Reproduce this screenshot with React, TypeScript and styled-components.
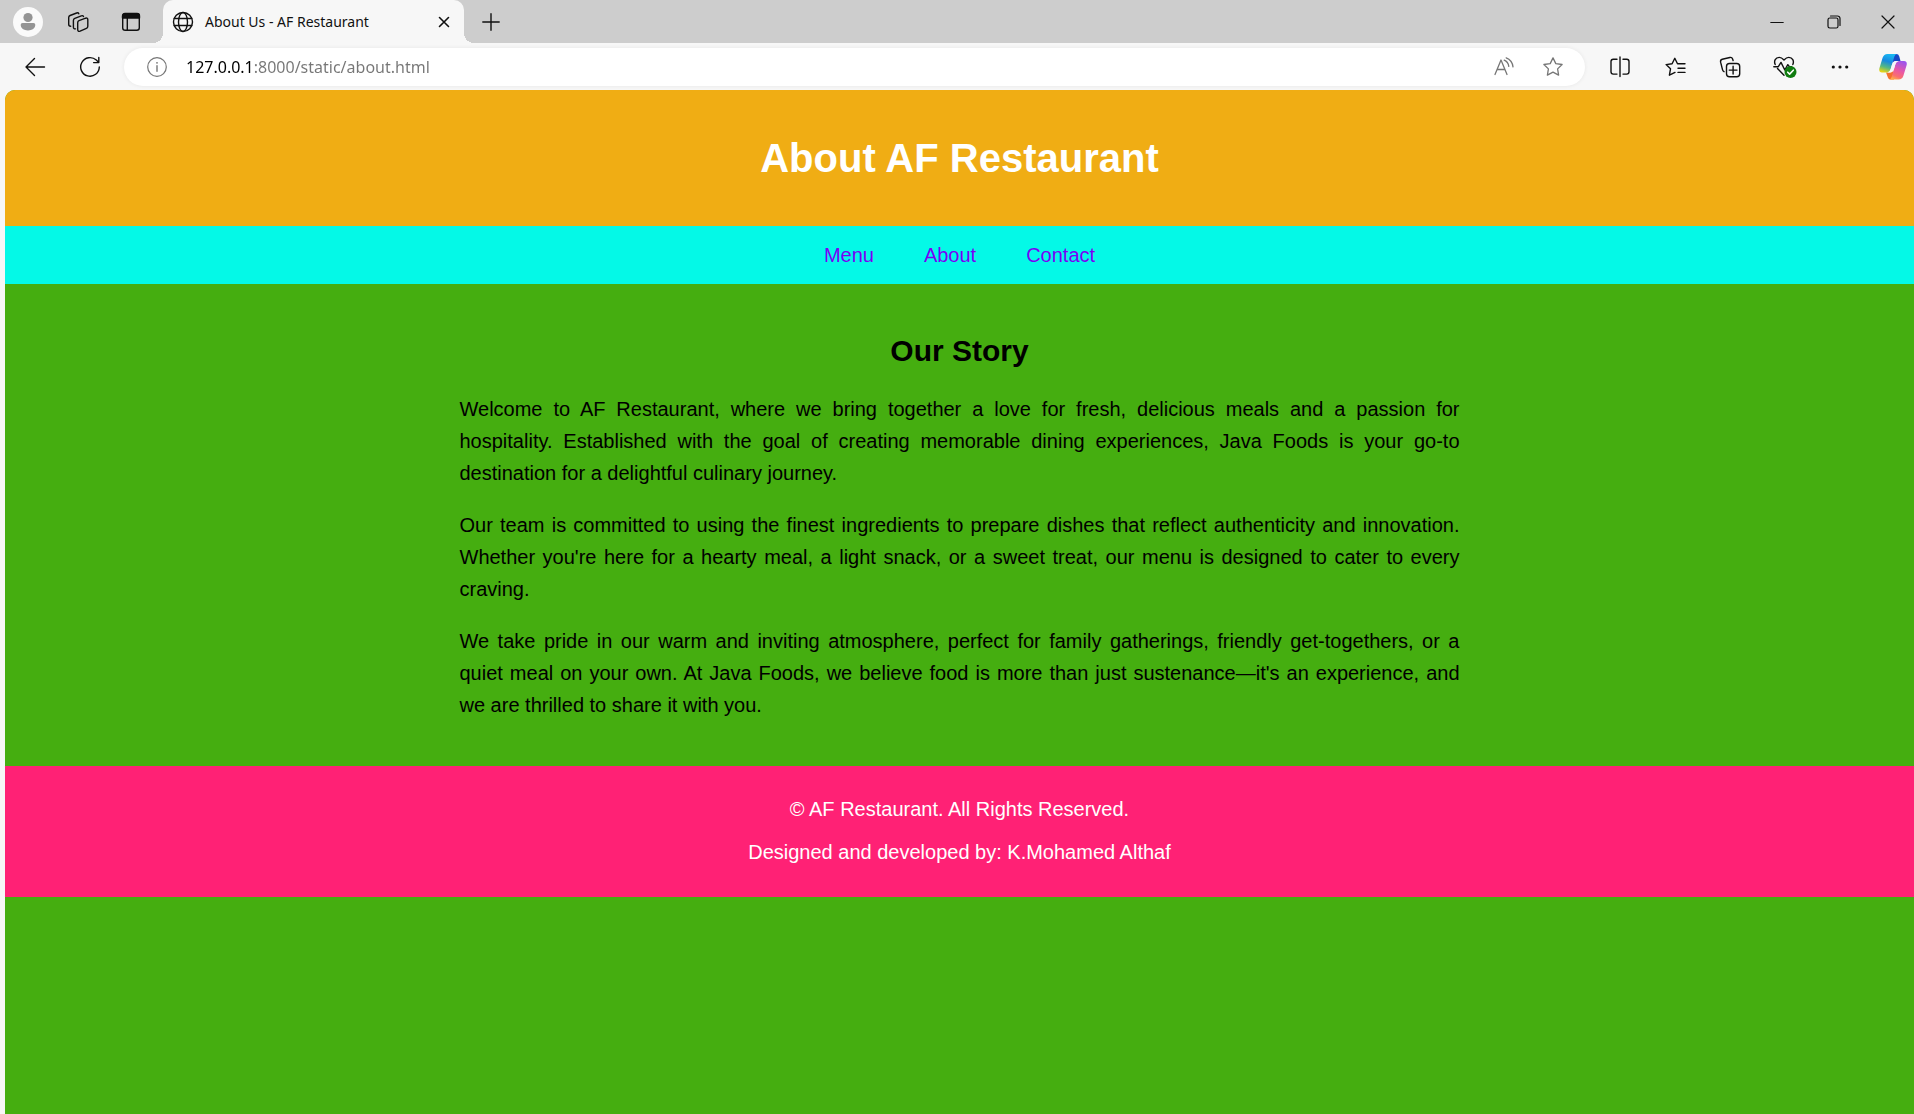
import React from "react";
import styled, { createGlobalStyle } from "styled-components";

const GlobalStyle = createGlobalStyle`
  *, *::before, *::after { box-sizing: border-box; }
  body { margin: 0; background: #f7f7f7; }
`;

const chromeFont = `"Noto Sans", "Open Sans", sans-serif`;
const pageFont = `"Liberation Sans", Arial, sans-serif`;

const Window = styled.div`
  display: flex;
  flex-direction: column;
  min-height: 100vh;
  font-family: ${chromeFont};
  color: #111;
`;

const TabStrip = styled.div`
  display: flex;
  height: 43px;
  background: #cdcdcd;
`;

const IconButton = styled.button<{ $width: number; $align?: string }>`
  display: flex;
  flex: none;
  align-items: center;
  justify-content: ${(p) => p.$align ?? "center"};
  width: ${(p) => p.$width}px;
  height: 100%;
  padding: 0;
  border: 0;
  background: none;
  color: inherit;
  font: inherit;
`;

const ProfileButton = styled(IconButton)`
  padding-left: 13px;
`;

const Tab = styled.div`
  position: relative;
  display: flex;
  align-items: center;
  width: 301px;
  margin-left: 6px;
  padding-left: 9px;
  background: #f7f7f7;
  border-radius: 10px 10px 0 0;

  &::before,
  &::after {
    content: "";
    position: absolute;
    bottom: 0;
    width: 10px;
    height: 10px;
  }
  &::before {
    right: 100%;
    background: radial-gradient(circle at 0 0, transparent 10px, #f7f7f7 10px);
  }
  &::after {
    left: 100%;
    background: radial-gradient(circle at 100% 0, transparent 10px, #f7f7f7 10px);
  }
`;

const TabTitle = styled.span`
  flex: 1;
  margin-left: 11px;
  font-size: 14px;
  line-height: 20px;
  white-space: nowrap;
`;

const WindowControls = styled.div`
  display: flex;
  margin-left: auto;
`;

const Toolbar = styled.div`
  display: flex;
  align-items: center;
  height: 47px;
  padding: 0 7px;
`;

const AddressBar = styled.form`
  display: flex;
  flex: 1;
  align-items: center;
  height: 38px;
  margin: 0 7px;
  padding: 0 8px 0 22px;
  color: #767676;
  background: #fff;
  border-radius: 19px;
  box-shadow: 0 0 4px rgba(0, 0, 0, 0.07);
`;

const AddressInput = styled.input`
  flex: 1;
  min-width: 0;
  height: 30px;
  margin-left: 18px;
  padding: 0;
  border: 0;
  outline: 0;
  font-family: ${chromeFont};
  font-size: 16px;
  color: #767676;
  background: linear-gradient(to right, #000 68px, #767676 68px);
  background-clip: text;
  -webkit-background-clip: text;
  -webkit-text-fill-color: transparent;
`;

const Page = styled.div`
  flex: 1;
  margin-left: 5px;
  overflow: hidden;
  border-radius: 10px 10px 0 0;
  background: #45ae10;
  color: #000;
  font-family: ${pageFont};
  font-size: 20px;
  line-height: 23px;
`;

const Header = styled.header`
  padding: 45px 25px;
  background: #f0ad14;
  color: #fff;
  text-align: center;
`;

const Title = styled.h1`
  margin: 0;
  font-size: 40px;
  line-height: 46px;
`;

const Nav = styled.nav`
  display: flex;
  justify-content: center;
  gap: 50px;
  padding: 17px;
  line-height: 24px;
  background: #04f9e7;
`;

const NavLink = styled.a`
  color: #7a00f5;
  text-decoration: none;
`;

const Story = styled.main`
  max-width: 1050px;
  margin: 0 auto;
  padding: 50px 25px 45px;
`;

const StoryTitle = styled.h2`
  margin: 0 0 25px;
  font-size: 30px;
  line-height: 34px;
  text-align: center;
`;

const Paragraph = styled.p`
  margin: 0;
  line-height: 32px;
  text-align: justify;

  & + & {
    margin-top: 20px;
  }
`;

const Footer = styled.footer`
  display: flex;
  flex-direction: column;
  gap: 20px;
  padding: 32px 25px 33px;
  background: #ff2175;
  color: #fff;
  text-align: center;
`;

const FooterLine = styled.p`
  margin: 0;
`;

const Icon = ({ size = 22, children }: { size?: number; children: React.ReactNode }) => (
  <svg
    width={size}
    height={size}
    viewBox={`0 0 ${size} ${size}`}
    fill="none"
    stroke="currentColor"
    strokeWidth="1.4"
    strokeLinecap="round"
    strokeLinejoin="round"
    aria-hidden="true"
  >
    {children}
  </svg>
);

const ProfileIcon = () => (
  <Icon size={30}>
    <circle cx="15" cy="15" r="15" fill="#fafafa" stroke="none" />
    <circle cx="15" cy="10.5" r="4.6" fill="#949494" stroke="none" />
    <path d="M9.5 16h11a1.8 1.8 0 0 1 1.8 1.8c0 3.6-3.2 5.6-7.3 5.6s-7.3-2-7.3-5.6A1.8 1.8 0 0 1 9.5 16Z" fill="#949494" stroke="none" />
  </Icon>
);

const WorkspacesIcon = () => (
  <Icon>
    <path d="M12 9.6 18.6 7.2q2.2-.6 2.200 1.500v6.600q0 1.500-1.400 2.100l-6.300 2.800q-2.400.8-2.400-1.600v-6.900q0-1.500 1.300-2.100Z" />
    <path d="M8.5 17.900q-2.100.1-2.100-2V9.400q0-1.500 1.400-2.100l6.500-2.500q1.700-.6 2.200.8" />
    <path d="M3.700 15.200q-2-.1-2-2V6.600q0-1.500 1.400-2.100l6.500-2.500q1.700-.6 2.200.8" />
  </Icon>
);

const TabActionsIcon = () => (
  <Icon>
    <rect x="2.700" y="2.700" width="16.600" height="16.600" rx="2.500" />
    <path d="M2.500 7V5a2.500 2.500 0 0 1 2.500-2.500h12A2.500 2.500 0 0 1 19.500 5v2Z" fill="currentColor" />
    <path d="M7.300 7v12" />
  </Icon>
);

const GlobeIcon = () => (
  <Icon>
    <circle cx="11" cy="11" r="9.5" />
    <ellipse cx="11" cy="11" rx="4.5" ry="9.5" />
    <path d="M2.300 7.500h17.400M2.300 14.500h17.400" />
  </Icon>
);

const CloseTabIcon = () => (
  <Icon size={12}>
    <path d="m1.500 1.500 9 9m0-9-9 9" strokeWidth="1.6" />
  </Icon>
);

const NewTabIcon = () => (
  <Icon size={18}>
    <path d="M9 .8v16.400M.8 9h16.400" />
  </Icon>
);

const MinimizeIcon = () => (
  <Icon size={14}>
    <path d="M.8 7.500h12.400" strokeWidth="1.2" />
  </Icon>
);

const RestoreIcon = () => (
  <Icon size={14}>
    <rect x="1" y="3" width="10" height="10" rx="1.8" strokeWidth="1.2" />
    <path d="M3.500 1H10.500a2.500 2.500 0 0 1 2.500 2.500v7" strokeWidth="1.2" />
  </Icon>
);

const CloseWindowIcon = () => (
  <Icon size={14}>
    <path d="m1 1 12 12m0-12L1 13" strokeWidth="1.2" />
  </Icon>
);

const BackIcon = () => (
  <Icon>
    <path d="M20.500 11H2m8.500-8.500L2 11l8.500 8.500" />
  </Icon>
);

const ReloadIcon = () => (
  <Icon>
    <path d="M20.300 11a9.300 9.300 0 1 1-3-6.900l2.200 2.200M19.800 1.400v5.200h-5.200" />
  </Icon>
);

const InfoIcon = () => (
  <Icon>
    <circle cx="11" cy="11" r="9.300" strokeWidth="1.2" />
    <path d="M11 9.800v5.400" />
    <circle cx="11" cy="6.800" r=".9" fill="currentColor" stroke="none" />
  </Icon>
);

const ReadAloudIcon = () => (
  <Icon>
    <path d="m2 18.500 6-14.500 6 14.500M4.200 13.500h7.600M11.200 4.200q4 1.600 4.600 6.200M13.200 1.800q6 2.300 6.800 9" strokeWidth="1.3" />
  </Icon>
);

const StarIcon = () => (
  <Icon>
    <path d="m11 1.900 2.800 5.700 6.300.9-4.500 4.400 1 6.200-5.600-2.900-5.600 2.900 1-6.200L1.900 8.500l6.300-.9Z" strokeWidth="1.3" />
  </Icon>
);

const SplitIcon = () => (
  <Icon>
    <path d="M8 3.300H4.300a2.300 2.300 0 0 0-2.300 2.300v10.200a2.300 2.300 0 0 0 2.300 2.300H8M14 3.300h3.700A2.300 2.300 0 0 1 20 5.600v10.200a2.300 2.300 0 0 1-2.300 2.300H14M11 1v19.500" />
  </Icon>
);

const FavoritesIcon = () => (
  <Icon>
    <path d="M21 7.700h-7.500l-2.700-5.400-2.700 5.400-6 .9 4.400 4.200-1.100 6.400L11 16.400M14 12.200h7M14 16.400h7" />
  </Icon>
);

const CollectionsIcon = () => (
  <Icon>
    <rect x="7.500" y="7.500" width="13.200" height="13.200" rx="3" />
    <path d="M14.100 10.200v7.800M10.200 14.100H18M5 15.700q-1.200-.5-1.500-2L1.600 6.200q-.5-2.300 1.700-2.900l7.600-1.800q2-.5 2.700 1.500l.5 1.500" />
  </Icon>
);

const EssentialsIcon = () => (
  <Icon size={26}>
    <path d="M3.200 10.500C1.600 7 3.500 3.400 7.200 3.400q2.300 0 4.800 2.700 2.500-2.700 4.800-2.700c3.700 0 5.600 3.600 4 7.100M1.800 12.700h4.500l2.700-4.300 3.800 7.600 3-5.300 1.700 2h2M5.500 14.500l6.500 6.700" />
    <circle cx="18.500" cy="18" r="6" fill="#107c10" stroke="none" />
    <path d="m15.700 18.200 1.900 1.900 3.700-3.900" stroke="#fff" strokeWidth="1.6" />
  </Icon>
);

const MoreIcon = () => (
  <Icon size={18}>
    <g fill="currentColor" stroke="none">
      <circle cx="2.300" cy="9" r="1.6" />
      <circle cx="9" cy="9" r="1.6" />
      <circle cx="15.700" cy="9" r="1.6" />
    </g>
  </Icon>
);

const CopilotIcon = () => (
  <Icon size={28}>
    <defs>
      <linearGradient id="cool" x1="0.6" y1="0" x2="0.3" y2="1">
        <stop offset="0" stopColor="#19b9f2" />
        <stop offset="0.4" stopColor="#1789e0" />
        <stop offset="0.72" stopColor="#55b883" />
        <stop offset="1" stopColor="#e9d414" />
      </linearGradient>
      <linearGradient id="warm" x1="0.7" y1="0" x2="0.3" y2="1">
        <stop offset="0" stopColor="#9c55ec" />
        <stop offset="0.5" stopColor="#e958a5" />
        <stop offset="0.8" stopColor="#fa6d70" />
        <stop offset="1" stopColor="#ffab48" />
      </linearGradient>
    </defs>
    <g stroke="none">
      <path d="M14 1h3.500q2 0 2.700 2.200L21.500 8H17q-2.500 0-3.500 3Z" fill="#1848c5" />
      <path d="M7 19.500h4q2.300 0 3.200-2.700L15 26.500h-3.500q-2 0-2.700-2.200Z" fill="#f4702c" />
      <path d="M8.500 1H18q-2 .3-2.700 2.800L11.700 16q-1 3.500-4.200 3.500H3q-3.500 0-2.600-4.300L3.600 4.800Q4.800 1 8.500 1Z" fill="url(#cool)" />
      <path d="M19.500 26.500H10q2-.3 2.700-2.800l3.600-12.200Q17.300 8 20.500 8H25q3.500 0 2.600 4.300l-3.200 10.400q-1.200 3.800-4.900 3.800Z" fill="url(#warm)" />
      <path d="M19.500 8Q17.300 8.500 16.400 11.200L15 16q-1 3.500-4 3.500H8.500q2.300-.6 3.200-3.500l1.400-4.800Q14.100 8 17 8Z" fill="#f7f7f7" />
    </g>
  </Icon>
);

const paragraphs = [
  "Welcome to AF Restaurant, where we bring together a love for fresh, delicious meals and a passion for hospitality. Established with the goal of creating memorable dining experiences, Java Foods is your go-to destination for a delightful culinary journey.",
  "Our team is committed to using the finest ingredients to prepare dishes that reflect authenticity and innovation. Whether you're here for a hearty meal, a light snack, or a sweet treat, our menu is designed to cater to every craving.",
  "We take pride in our warm and inviting atmosphere, perfect for family gatherings, friendly get-togethers, or a quiet meal on your own. At Java Foods, we believe food is more than just sustenance—it's an experience, and we are thrilled to share it with you.",
];

export default function App() {
  return (
    <Window>
      <GlobalStyle />
      <TabStrip>
        <ProfileButton $width={51} $align="flex-start" aria-label="Profile"><ProfileIcon /></ProfileButton>
        <IconButton $width={53} aria-label="Workspaces"><WorkspacesIcon /></IconButton>
        <IconButton $width={53} aria-label="Tab actions menu"><TabActionsIcon /></IconButton>
        <Tab>
          <GlobeIcon />
          <TabTitle>About Us - AF Restaurant</TabTitle>
          <IconButton $width={40} aria-label="Close tab"><CloseTabIcon /></IconButton>
        </Tab>
        <IconButton $width={53} aria-label="New tab"><NewTabIcon /></IconButton>
        <WindowControls>
          <IconButton $width={57} aria-label="Minimize"><MinimizeIcon /></IconButton>
          <IconButton $width={57} aria-label="Restore"><RestoreIcon /></IconButton>
          <IconButton $width={52} aria-label="Close"><CloseWindowIcon /></IconButton>
        </WindowControls>
      </TabStrip>

      <Toolbar>
        <IconButton $width={55} aria-label="Back"><BackIcon /></IconButton>
        <IconButton $width={55} aria-label="Refresh"><ReloadIcon /></IconButton>
        <AddressBar onSubmit={(e) => e.preventDefault()}>
          <InfoIcon />
          <AddressInput
            type="text"
            aria-label="Address"
            spellCheck={false}
            defaultValue="127.0.0.1:8000/static/about.html"
          />
          <IconButton type="button" $width={49} aria-label="Read aloud"><ReadAloudIcon /></IconButton>
          <IconButton type="button" $width={49} aria-label="Add to favorites"><StarIcon /></IconButton>
        </AddressBar>
        <IconButton $width={55} aria-label="Split screen"><SplitIcon /></IconButton>
        <IconButton $width={55} aria-label="Favorites"><FavoritesIcon /></IconButton>
        <IconButton $width={55} aria-label="Collections"><CollectionsIcon /></IconButton>
        <IconButton $width={55} aria-label="Browser essentials"><EssentialsIcon /></IconButton>
        <IconButton $width={55} aria-label="Settings and more"><MoreIcon /></IconButton>
        <IconButton $width={40} $align="flex-end" aria-label="Copilot"><CopilotIcon /></IconButton>
      </Toolbar>

      <Page>
        <Header>
          <Title>About AF Restaurant</Title>
        </Header>
        <Nav>
          <NavLink href="#menu">Menu</NavLink>
          <NavLink href="#about">About</NavLink>
          <NavLink href="#contact">Contact</NavLink>
        </Nav>
        <Story>
          <StoryTitle>Our Story</StoryTitle>
          {paragraphs.map((text) => (
            <Paragraph key={text}>{text}</Paragraph>
          ))}
        </Story>
        <Footer>
          <FooterLine>© AF Restaurant. All Rights Reserved.</FooterLine>
          <FooterLine>Designed and developed by: K.Mohamed Althaf</FooterLine>
        </Footer>
      </Page>
    </Window>
  );
}
